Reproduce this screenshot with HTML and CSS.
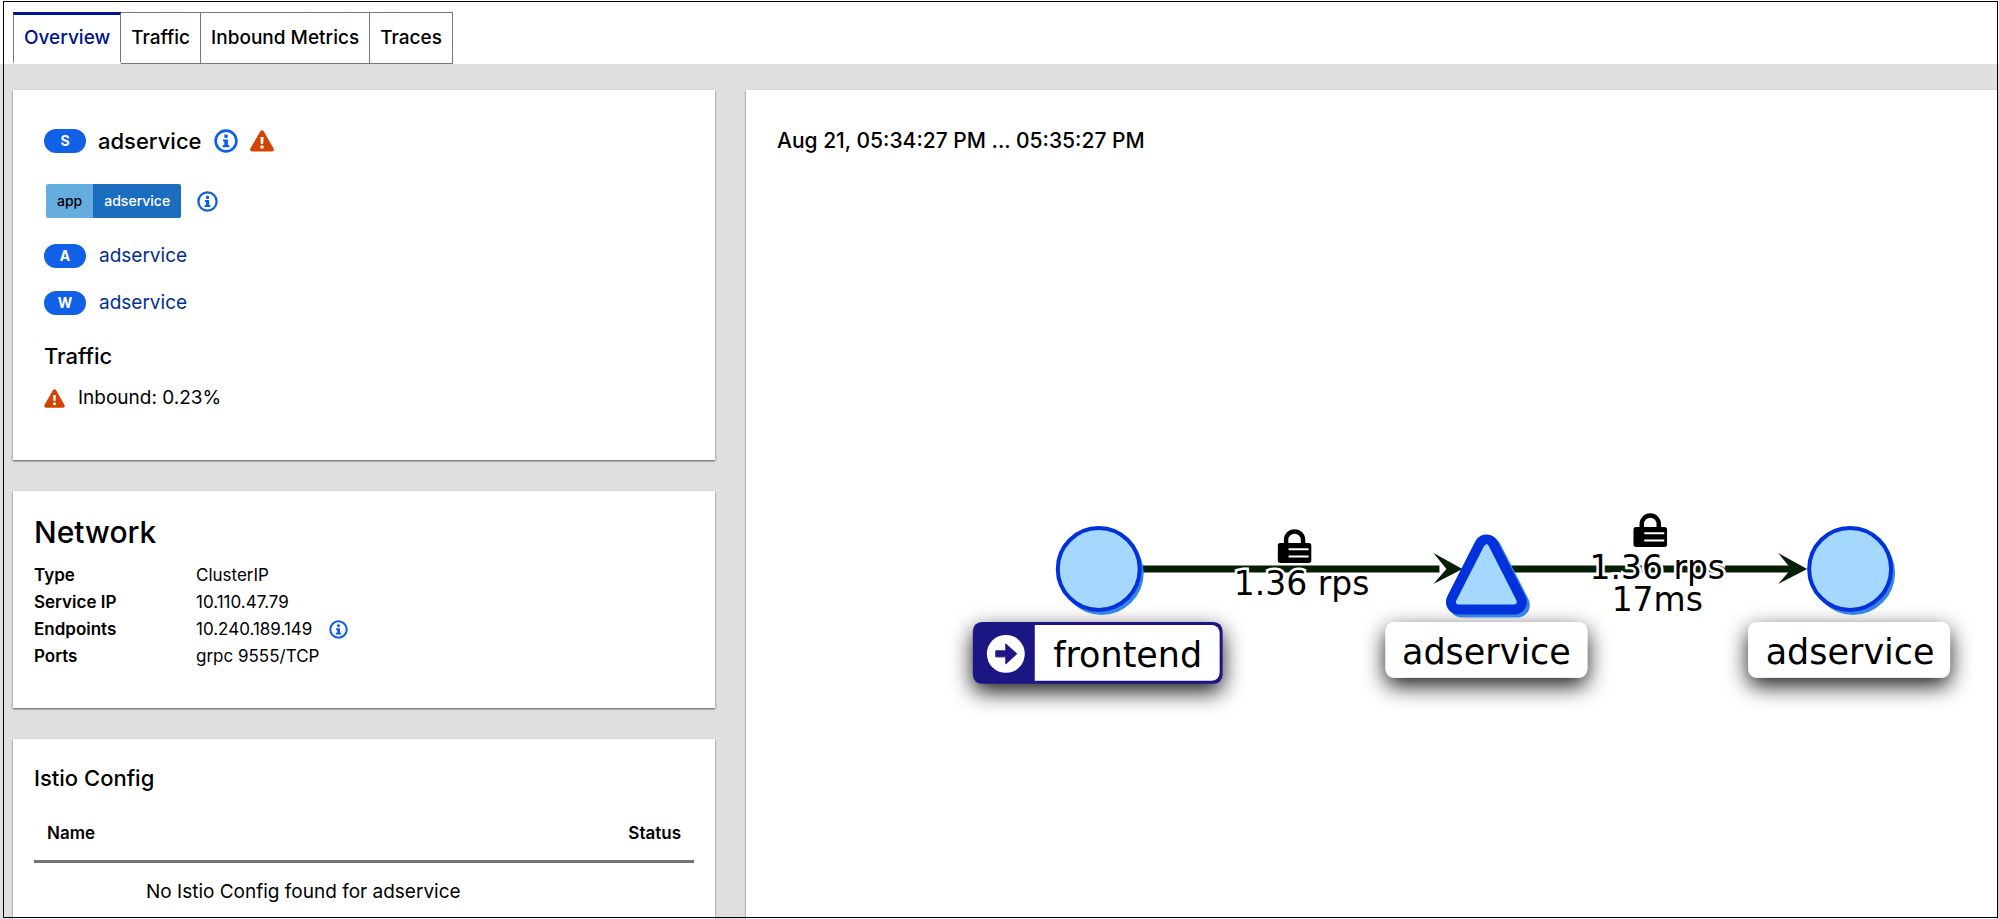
FILE: index.html
```html
<!DOCTYPE html>
<html lang="en">
<head>
<meta charset="utf-8">
<title>adservice</title>
<link rel="stylesheet" href="styles.css">
</head>
<body>
<svg class="defs" aria-hidden="true">
  <symbol id="i-info" viewBox="0 0 24 24">
    <circle cx="12" cy="12" r="10.4" fill="none" stroke="currentColor" stroke-width="2.6"/>
    <rect x="10.2" y="5.4" width="3.6" height="3.6" rx="1.4" fill="currentColor"/>
    <path d="M9 10.400h4.900v5.600h1.400v2.200H8.700V16h1.600v-3.400H9z" fill="currentColor"/>
  </symbol>
  <symbol id="i-warn" viewBox="0 0 24 22">
    <path d="M10.3 1.2a2 2 0 0 1 3.4 0l9.9 17.4a2 2 0 0 1-1.7 3H2.1a2 2 0 0 1-1.7-3z" fill="currentColor"/>
    <path d="M10.4 7h3.2l-.5 7h-2.2z" fill="#fff"/>
    <circle cx="12" cy="17" r="1.8" fill="#fff"/>
  </symbol>
</svg>
<div class="page">
  <nav class="tabs">
    <button class="tab tab-active" type="button">Overview</button>
    <button class="tab" type="button">Traffic</button>
    <button class="tab" type="button">Inbound Metrics</button>
    <button class="tab" type="button">Traces</button>
  </nav>
  <main class="content">
    <div class="side">
      <section class="card service">
        <h1 class="row title-row"><span class="pill">S</span><span class="name">adservice</span>
          <svg class="ico-info"><use href="#i-info"/></svg><svg class="ico-warn"><use href="#i-warn"/></svg></h1>
        <div class="label-row"><span class="label"><span class="key">app</span><span class="value">adservice</span></span><svg class="ico-info-md"><use href="#i-info"/></svg></div>
        <div class="row"><span class="pill">A</span><a href="#app">adservice</a></div>
        <div class="row"><span class="pill">W</span><a href="#workload">adservice</a></div>
        <h2 class="sub">Traffic</h2>
        <div class="health"><svg class="ico-warn-sm"><use href="#i-warn"/></svg>Inbound: 0.23%</div>
      </section>
      <section class="card network">
        <h2 class="big">Network</h2>
        <dl class="facts">
          <dt>Type</dt><dd>ClusterIP</dd>
          <dt>Service IP</dt><dd>10.110.47.79</dd>
          <dt>Endpoints</dt><dd>10.240.189.149<svg class="ico-info-sm"><use href="#i-info"/></svg></dd>
          <dt>Ports</dt><dd>grpc 9555/TCP</dd>
        </dl>
      </section>
      <section class="card config">
        <h2 class="sub">Istio Config</h2>
        <table class="table">
          <thead><tr><th>Name</th><th class="right">Status</th></tr></thead>
          <tbody><tr><td colspan="2">No Istio Config found for adservice</td></tr></tbody>
        </table>
      </section>
    </div>
    <section class="card graph">
      <h2 class="sub time">Aug 21, 05:34:27 PM ... 05:35:27 PM</h2>
      <svg class="canvas" viewBox="0 0 1252 320" role="img" aria-label="Traffic graph">
        <defs>
          <filter id="shadow" x="-30%" y="-80%" width="160%" height="280%">
            <feDropShadow dx="0" dy="8" stdDeviation="11" flood-color="#000" flood-opacity=".9"/>
          </filter>
          <symbol id="lock" viewBox="0 0 34 34">
            <path d="M8.5 17v-6a8.500 8.500 0 0 1 17 0v6" fill="none" stroke="#000" stroke-width="4.500"/>
            <rect x="0" y="14" width="34" height="20" rx="3" fill="#000"/>
            <path d="M11 20.200h20M11 27.500h20" stroke="#fff" stroke-width="2"/>
          </symbol>
        </defs>
        <g filter="url(#shadow)">
          <rect x="227" y="122" width="250" height="62" rx="9" fill="#1f1585"/>
          <rect x="640" y="122" width="202" height="56" rx="9" fill="#fff"/>
          <rect x="1003" y="122" width="202" height="56" rx="9" fill="#fff"/>
        </g>
        <path d="M289 125h177a8 8 0 0 1 8 8v40a8 8 0 0 1-8 8H289z" fill="#fff"/>
        <circle cx="260" cy="154" r="19" fill="#fff"/>
        <path d="M250 151h10v-7l11 10-11 10v-7h-10z" fill="#1f1585" stroke="#1f1585"/>
        <path d="M390 69h304M756 69h298" stroke="#041f04" stroke-width="7"/>
        <path d="M688 53l29 16-29 15 13-15z" fill="#041f04"/>
        <path d="M1033 53l29 16-29 15 13-15z" fill="#041f04"/>
        <g fill="#a5d8ff">
          <circle cx="356" cy="73" r="42" fill="#3584e8"/>
          <circle cx="353" cy="69" r="41" stroke="#0031da" stroke-width="4"/>
          <circle cx="1108" cy="73" r="42" fill="#3584e8"/>
          <circle cx="1105" cy="69" r="41" stroke="#0031da" stroke-width="4"/>
        </g>
        <path d="M741 47L713 102h56z" transform="translate(3 3)" fill="#3584e8" stroke="#3584e8" stroke-width="25" stroke-linejoin="round"/>
        <path d="M741 47L713 102h56z" fill="#0031da" stroke="#0031da" stroke-width="25" stroke-linejoin="round"/>
        <path d="M741 47L713 102h56z" fill="#a5d8ff" stroke="#a5d8ff" stroke-width="5" stroke-linejoin="round"/>
        <use href="#lock" x="532" y="29" width="34" height="34"/>
        <use href="#lock" x="888" y="13" width="34" height="34"/>
        <g class="edge-text">
          <text x="556" y="95">1.36 rps</text>
          <text x="912" y="79">1.36 rps</text>
          <text x="912" y="111">17ms</text>
        </g>
        <g class="node-text">
          <text x="382" y="167">frontend</text>
          <text x="741" y="164">adservice</text>
          <text x="1105" y="164">adservice</text>
        </g>
      </svg>
    </section>
  </main>
</div>
<div class="frame"></div>
</body>
</html>
```
FILE: styles.css
```css
* { box-sizing: border-box; }
body {
  margin: 0;
  background: #dfdfdf;
  color: #000;
  font: 500 19px/28px Inter, "Noto Sans", sans-serif;
}
h1, h2, dl, dd { margin: 0; }
.defs { display: none; }
.frame {
  position: fixed;
  inset: 1px 1px 1px 3px;
  border: 1px solid #000;
  pointer-events: none;
}
.page {
  height: 100vh;
  overflow: hidden;
  display: flex;
  flex-direction: column;
}
.tabs { display: flex; padding: 12px 13px 0; background: #fff; }
.tab {
  height: 52px;
  padding: 0 10px;
  border: 1px solid #777;
  border-left-width: 0;
  background: #fff;
  color: #000;
  font: inherit;
}
.tab-active {
  border-left-width: 1px;
  border-top: 3px solid #001489;
  border-bottom: 3px solid #fff;
  color: #001489;
}
.content {
  flex: 1;
  min-height: 0;
  display: grid;
  grid-template-columns: 702px 1fr;
  gap: 31px;
  padding: 26px 2px 0 13px;
}
.side { display: flex; flex-direction: column; gap: 31px; }
.card { background: #fff; box-shadow: 0 1px 2px #0009; }
.service { height: 370px; padding: 37px 31px; flex: none; }
.row { display: flex; align-items: center; gap: 13px; height: 47px; }
.title-row { gap: 12px; height: 28px; font-size: 22px; font-weight: 500; }
.pill {
  width: 42px;
  height: 24px;
  border-radius: 12px;
  background: #1160e8;
  color: #fff;
  font-size: 14px;
  line-height: 24px;
  font-weight: 700;
  text-align: center;
}
.ico-info { width: 24px; height: 24px; color: #0d5eea; }
.ico-info-md { width: 21px; height: 21px; color: #0d5eea; }
.ico-info-sm { width: 19px; height: 19px; color: #0d5eea; margin-left: 17px; }
.ico-warn { width: 24px; height: 22px; color: #d04400; }
.ico-warn-sm { width: 21px; height: 19px; color: #d04400; }
.label-row { display: flex; align-items: center; gap: 16px; padding: 29px 0 14px 2px; }
.label { display: flex; font-size: 14px; line-height: 34px; }
.key { padding: 0 11px; background: #66addf; border-radius: 2px 0 0 2px; }
.value { padding: 0 11px; background: #1b6dbf; color: #fff; border-radius: 0 2px 2px 0; }
a { color: #00308f; text-decoration: none; font-weight: 400; }
.sub { font-size: 22px; line-height: 28px; font-weight: 500; }
.service .sub { padding-top: 16px; }
.health { display: flex; align-items: center; gap: 13px; padding-top: 14px; font-weight: 400; }
.network { height: 217px; padding: 21px 21px; flex: none; }
.big { font-size: 30px; line-height: 40px; font-weight: 500; }
.facts {
  display: grid;
  grid-template-columns: 162px 1fr;
  grid-auto-rows: 27px;
  padding-top: 10px;
  font-size: 17px;
  line-height: 27px;
}
dt { font-weight: 600; }
dd { display: flex; align-items: center; font-weight: 400; }
.config { flex: 1; padding: 25px 21px; }
.table { width: 100%; margin-top: 14px; border-collapse: collapse; }
th {
  height: 55px;
  padding: 0 13px;
  border-bottom: 3px solid #777;
  font-size: 17px;
  font-weight: 600;
  text-align: left;
}
.right { text-align: right; }
td { height: 60px; padding: 0 112px; font-weight: 400; }
.graph { display: flex; flex-direction: column; }
.time { padding: 37px 31px 36px; font-size: 21px; }
.canvas { width: 100%; margin-top: 309px; overflow: visible; }
.edge-text, .node-text { font-family: "DejaVu Sans", sans-serif; text-anchor: middle; }
.edge-text {
  font-size: 33px;
  stroke: #fff;
  stroke-width: 5px;
  paint-order: stroke;
}
.node-text { font-size: 35px; }
```
